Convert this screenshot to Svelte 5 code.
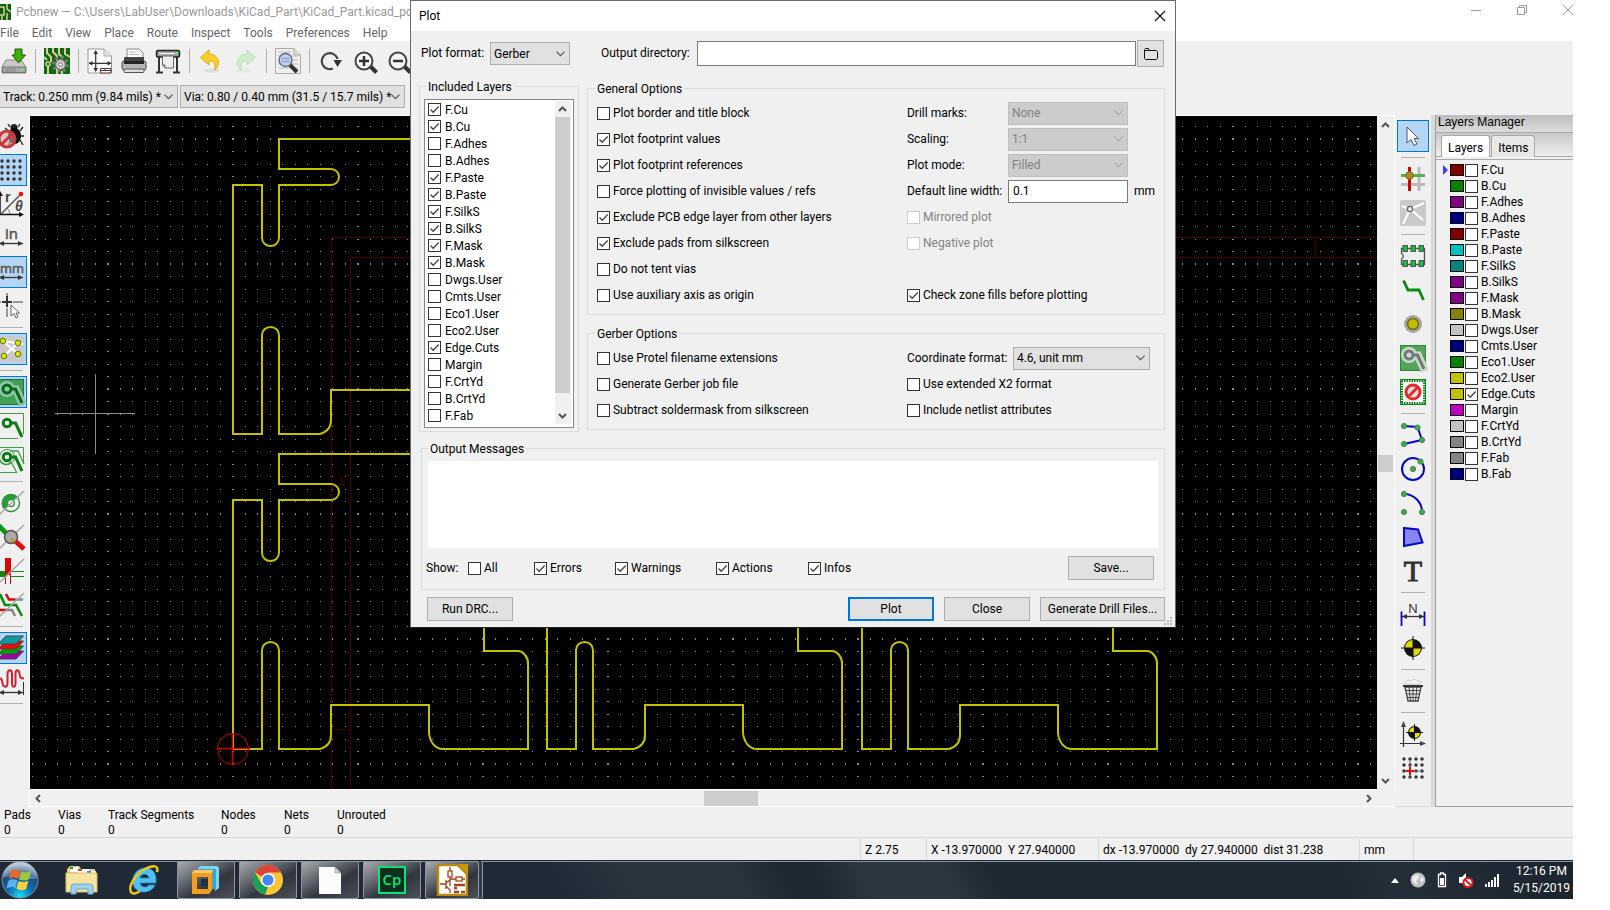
<script>
  const menus = ['File', 'Edit', 'View', 'Place', 'Route', 'Inspect', 'Tools', 'Preferences', 'Help'];

  const zone = (bg, border, halo, trace) => `
    <rect x="0.5" y="0.5" width="25" height="25" fill="${bg}" stroke="${border}"/>
    <path d="M9 10.500H18L25 26" fill="none" stroke="${halo}" stroke-width="8"/>
    <circle cx="9" cy="10" r="8" fill="${halo}"/>
    <path d="M12 10H17.500L24 24" fill="none" stroke="${trace}" stroke-width="3"/>
    <circle cx="9" cy="10" r="4" fill="${halo}" stroke="${trace}" stroke-width="3"/>`;
  const slash = '<path d="M0 26L26 1" stroke="#a8a8a8" stroke-width="1.500"/>';
  const dot = (x, y) => `<circle cx="${x}" cy="${y}" r="2.600" fill="#2cb83c" stroke="#5f7a5f"/>`;
  const range = [4, 10, 16, 22];
  const dots = range.map((x) => range.map((y) => `<circle cx="${x}" cy="${y}" r="1.700" fill="#333"/>`).join('')).join('');
  const target = (x, y, r, l) => `
    <circle cx="${x}" cy="${y}" r="${r}" fill="#111"/>
    <path d="M${x} ${y}V${y - r + 1}A${r - 1} ${r - 1} 0 0 0 ${x - r + 1} ${y}Z M${x} ${y}V${y + r - 1}A${r - 1} ${r - 1} 0 0 0 ${x + r - 1} ${y}Z" fill="#e2da00"/>
    <path d="M${x} ${y - l}V${y + l}M${x - l} ${y}H${x + l}" stroke="#111"/>`;
  const arrowH = (y, a, b) => `<path d="M${a} ${y}H${b}" stroke="#333" stroke-width="1.300"/><path d="M${a} ${y}l5 -2.500v5zM${b} ${y}l-5 -2.500v5z" fill="#333"/>`;
  const lens = (inner) => `
    <path d="M18 18L24.500 24.500" stroke="#333" stroke-width="4"/>
    <circle cx="12" cy="13" r="8.500" fill="#f4f4f4" stroke="#444" stroke-width="2"/>${inner}`;
  const page = '<path d="M1 1H17L24.500 8V25H1Z" fill="#fafafa" stroke="#999"/><path d="M17 1V8H24.500" fill="#e4e4e4" stroke="#aaa"/>';

  const icons = {
    save: `<path d="M5 12H20L25 19V25H1V19Z" fill="#c9c9c9" stroke="#888"/><path d="M1.500 19H24.500V24.500H1.500Z" fill="#a9a9a9" stroke="#777"/><path d="M4 21H15M4 23H15" stroke="#888"/><rect x="20" y="21" width="2.500" height="2" fill="#4f4"/><path d="M14 1H21V7H24.500L17.700 15L11 7H14Z" fill="#3fae08" stroke="#1d5a02"/>`,
    board: `<rect width="26" height="26" fill="#0c6a12"/><path d="M3 0V5L7 9V14M9 0V4L13 8V26M15 0V6L19 10M21 0V6L26 9M4 26V17M0 9L3 12M18 26V23" fill="none" stroke="#e2c79a" stroke-width="2"/><circle cx="4" cy="16" r="2" fill="#0c6a12" stroke="#e2c79a" stroke-width="1.500"/><circle cx="16.500" cy="16.500" r="7" fill="none" stroke="#777" stroke-width="3" stroke-dasharray="2.700 2.800"/><circle cx="16.500" cy="16.500" r="5" fill="#ddd" stroke="#777" stroke-width="1.500"/><circle cx="16.500" cy="16.500" r="2" fill="#eee" stroke="#666"/>`,
    page: `${page}<path d="M8.700 3V23M2 15.300H24" stroke="#333" stroke-width="1.200"/><path d="M8.700 2l2.300 4h-4.600zM8.700 24l2.300 -4h-4.600zM1.500 15.300l4 -2.300v4.600zM24.500 15.300l-4 -2.300v4.600z" fill="#333"/><path d="M13.500 20.500H24V25H13.500ZM13.500 22.500H24M18 20V22.500" fill="#fff" stroke="#533"/>`,
    print: `<path d="M6 1H18L22 5V13H6Z" fill="#fff" stroke="#888"/><path d="M8 4H16M8 6.500H18" stroke="#bbb"/><rect x="3" y="9" width="20" height="6" rx="1" fill="#444"/><rect x="1" y="13" width="24" height="9" rx="2" fill="#b4b4b4" stroke="#444"/><rect x="3" y="13" width="20" height="3" fill="#222"/><rect x="3" y="21" width="20" height="3.500" rx="1" fill="#ddd" stroke="#555"/>`,
    plotter: `<path d="M4 9V24M22 9V24" stroke="#333" stroke-width="2"/><path d="M1 24.500H8M18 24.500H25" stroke="#333" stroke-width="2"/><rect x="1.500" y="2.500" width="23" height="6.500" rx="1.500" fill="#999" stroke="#222" stroke-width="1.500"/><path d="M4 5.500H20" stroke="#eee" stroke-width="1.500"/><rect x="21" y="4" width="2" height="2" fill="#5f5"/><path d="M7.500 8V17L10 20H18.500V8Z" fill="#eee" stroke="#666"/><path d="M7.500 17H10V20" fill="#bbb" stroke="#666"/>`,
    undo: `<ellipse cx="14" cy="22.500" rx="8" ry="2" fill="#ddd"/><path d="M11 2L2.500 9.500L11 17V13C16 12.500 18 15 16.500 22C23 18 22 6.500 11 6Z" fill="#f6cf29" stroke="#dcae0c"/>`,
    redo: `<g opacity="0.45"><ellipse cx="12" cy="22.500" rx="8" ry="2" fill="#ddd"/><path d="M15 2L23.500 9.500L15 17V13C10 12.500 8 15 9.500 22C3 18 4 6.500 15 6Z" fill="#a5e8a0" stroke="#7ccf74"/></g>`,
    find: `<path d="M0.500 0.500H19L25.500 7V25.500H0.500Z" fill="#f0f0f0" stroke="#aaa"/><path d="M19 0.500V7H25.500" fill="#ddd" stroke="#aaa"/><path d="M3 4H17M3 8H23M3 12H23M3 16H23M3 20H23" stroke="#bbb"/><path d="M15 17L22 24" stroke="#333" stroke-width="4"/><circle cx="10.500" cy="12" r="6.500" fill="#c4d2ea" stroke="#5a6688" stroke-width="1.300"/><path d="M6 10.500H15M6 13.500H15" stroke="#8fa6d0" stroke-width="1.300"/>`,
    refresh: `<path d="M15 20.500A8 8 0 1 1 19.500 11" fill="none" stroke="#444" stroke-width="2.200"/><path d="M15.500 12H24L19.500 19Z" fill="#333"/>`,
    zoomin: lens('<path d="M7 13H17M12 8V18" stroke="#333" stroke-width="2.500"/>'),
    zoomout: lens('<path d="M7 13H17" stroke="#333" stroke-width="2.500"/>'),
    bug: `<path d="M12 4L10 1M20 4L22 1M11 8L7 5M22 8L25 4M22 13H26M22 17L25 22M12 18L11 22" stroke="#222" fill="none" stroke-width="1.300"/><circle cx="16" cy="4.500" r="3.500" fill="#222"/><ellipse cx="16.500" cy="13" rx="6.500" ry="8" fill="#050505"/><circle cx="9" cy="16" r="8" fill="#d9a5a5" fill-opacity="0.6" stroke="#c8383a" stroke-width="3"/><path d="M3.500 21.500L14.500 10.500" stroke="#c8383a" stroke-width="3"/>`,
    grid: dots,
    polar: `<path d="M2 2V23.500H24" fill="none" stroke="#111" stroke-width="1.500"/><path d="M2 0L5 5H0ZM26 23.500L21 21V26Z" fill="#111"/><path d="M3 23L22 4" stroke="#555" stroke-width="1.500"/><path d="M9 17A9 9 0 0 1 12 23" fill="none" stroke="#777"/><circle cx="23" cy="3" r="2.300" fill="#f01010"/><text x="7" y="11" font-family="Liberation Sans" font-size="14" font-weight="bold" fill="#444">r</text><text x="17" y="20" font-family="Liberation Sans" font-size="14" font-style="italic" font-weight="bold" fill="#444">θ</text>`,
    inch: `<text x="7" y="14" font-family="Open Sans" font-size="15" fill="#555" stroke="#555" stroke-width="0.500">in</text>${arrowH(18.500, 1, 25)}`,
    mm: `<text x="2" y="14" font-family="Open Sans" font-size="13" fill="#555" stroke="#555" stroke-width="0.500">mm</text>${arrowH(18.500, 1, 25)}`,
    cursor: `<path d="M9 0V3M9 15V24M0 9H3M15 9H25" stroke="#999" stroke-width="2"/><path d="M9 3V14M4 9H14" stroke="#333" stroke-width="2"/><path d="M13 12V23L16 20.500L18 25L20 24L18 20H21.500Z" fill="#fff" stroke="#666"/>`,
    rats: `<rect width="26" height="26" rx="2" fill="#cacaca"/><path d="M5 5L25 8M5 5L20 18M20 7L6 20" stroke="#fff" stroke-width="2"/>${[[5, 5], [20, 7], [6, 20], [20, 18]].map(([x, y]) => `<circle cx="${x}" cy="${y}" r="2.800" fill="#d6ea00" stroke="#66701a"/>`).join('')}`,
    zoneFill: zone('#439f57', '#1d7a2c', '#8fc7b0', '#0b6b14'),
    zoneNone: `<path d="M0 0.500H25.500V21M0 25.500H20" fill="none" stroke="#3d9f45"/><path d="M12 10H17.500L24 24" fill="none" stroke="#0b7d14" stroke-width="3"/><circle cx="9" cy="10" r="3.800" fill="#fff" stroke="#0b7d14" stroke-width="3"/>`,
    zoneLine: `<path d="M0 0.500H25.500V16M0 25.500H18" fill="none" stroke="#3d9f45"/><path d="M2 14C4 18 10 19 13 15L19 26M12 4H20L26 17" fill="none" stroke="#3d9f45" stroke-width="1.300"/><circle cx="9" cy="10" r="7.500" fill="none" stroke="#3d9f45"/><path d="M12 10H17.500L24 24" fill="none" stroke="#0b7d14" stroke-width="3"/><circle cx="9" cy="10" r="3.800" fill="#fff" stroke="#0b7d14" stroke-width="3"/>`,
    pad: `<circle cx="13" cy="13" r="8.500" fill="#fff" stroke="#2c9a38" stroke-width="1.500"/><path d="M6.500 20A9 9 0 0 1 19.500 6.500Z" fill="#2c9a38"/><circle cx="13" cy="13" r="3.500" fill="#f4f4f4" stroke="#2c9a38" stroke-width="1.500"/>${slash}`,
    via: `<path d="M0 1L9 10" stroke="#0a9a0f" stroke-width="5"/><path d="M15 15L26 25" stroke="#e00d0d" stroke-width="5"/>${slash}<circle cx="13" cy="13" r="6.500" fill="#aaa" stroke="#555" stroke-width="1.500"/><path d="M13 13L17.500 17.500A6 6 0 0 1 13 18Z" fill="#c2a010"/>`,
    track: `<rect y="13" width="9" height="6" fill="#0a8a12"/><rect x="7" width="6" height="17" fill="#d80808"/><path d="M13 13.500H26M13 18.500H26" stroke="#0a8a12"/><path d="M7.500 17V26M12.500 17V26" stroke="#d80808"/>${slash}`,
    contrast: `<path d="M8 2L11 7.500H17" fill="none" stroke="#d80808" stroke-width="2.500"/><path d="M17 7.500H25M9 18H14L17 24" fill="none" stroke="#888" stroke-width="2.500"/><path d="M0 18H9" stroke="#d80808" stroke-width="2.500"/><path d="M2 2L7 13H18L24 24" fill="none" stroke="#0a8a12" stroke-width="2.600"/>${slash}`,
    layers: `<g stroke="#444"><path d="M8 16H25.500L18 24H0Z" fill="#a000a8"/><path d="M8 11H25.500L18 19H0Z" fill="#00a010"/><path d="M8 6H25.500L18 14H0Z" fill="#f00c0c"/><path d="M8 1H25.500L18 9H0Z" fill="#109aa0"/></g>`,
    meander: `<path d="M1 9.500C4 9 4 11 4.500 14C5 19 9.500 19 9.500 14V5C9.500 0 14 0 14 5V14C14 19 17.500 19 17.500 14V5C17.500 0 21 0 21.500 5C22 9 23 9.500 26 9.500" fill="none" stroke="#c8282c" stroke-width="2"/>${arrowH(23.500, 1, 25)}<path d="M25.500 13V26" stroke="#333"/>`,
    pointer: `<path d="M7 4V20L11 16.500L14 22.500L17 21L14 15.500H18.500Z" fill="#fafafa" stroke="#555"/>`,
    local: `<path d="M19 1V25M1 18.500H25" stroke="#bbb" stroke-width="3"/><path d="M1 9.500H25" stroke="#56ae56" stroke-width="3"/><path d="M9.500 1V25" stroke="#c00808" stroke-width="3"/><circle cx="9.500" cy="9.500" r="3.800" fill="#a58a1a" stroke="#7d6a20"/>`,
    ratsLocal: `<rect width="26" height="26" rx="2" fill="#cacaca"/><path d="M10 9L2 6M10 9L24 3M10 9L23 20M10 9L3 24" stroke="#fff" stroke-width="2"/><circle cx="10" cy="9" r="2.600" fill="#eee" stroke="#666" stroke-width="1.300"/>`,
    footprint: `<path d="M1.500 5.500H24.500V21.500H1.500V16A3 3 0 0 0 1.500 10.500Z" fill="#eee" stroke="#555" stroke-width="1.300"/>${[3, 11, 19].map((x) => `<rect x="${x}" y="2.500" width="4.500" height="6" fill="#0fc52e" stroke="#555"/><rect x="${x}" y="17.500" width="4.500" height="6" fill="#0fc52e" stroke="#555"/>`).join('')}`,
    route: `<path d="M3.500 3.500L8 13H19L23.500 23" fill="none" stroke="#0a8a12" stroke-width="2.800"/>`,
    viaAdd: `<circle cx="13" cy="13" r="9" fill="#a6a6a6"/><circle cx="13" cy="13" r="5.500" fill="#c2bc00" stroke="#726f10" stroke-width="1.500"/>`,
    zoneAdd: zone('#55a25a', '#2b8a35', '#c9dccb', '#777'),
    keepout: `<rect x="1.500" y="1.500" width="23" height="23" fill="#fff" stroke="#0a8a12" stroke-width="3" stroke-dasharray="1.500 1"/><rect x="0.500" y="0.500" width="25" height="25" fill="none" stroke="#0a8a12"/><circle cx="13" cy="13" r="7" fill="#f3dcdc" stroke="#e02c2c" stroke-width="3"/><path d="M8 18L18 8" stroke="#e02c2c" stroke-width="3"/>`,
    polyline: `<path d="M4 4L17.500 5L22 18L4 22" fill="none" stroke="#0808c0" stroke-width="2"/>${dot(4, 4)}${dot(17.500, 5.500)}${dot(22, 18)}${dot(4, 22)}`,
    circle: `<circle cx="13" cy="13" r="11" fill="none" stroke="#0808c0" stroke-width="2"/>${dot(13, 13)}${dot(20.500, 5.500)}`,
    arc: `<path d="M4 4A18 18 0 0 1 22 22" fill="none" stroke="#0808c0" stroke-width="2"/>${dot(4, 4)}${dot(4, 22)}${dot(22, 22)}`,
    polygon: `<path d="M4 4L18 5.500L22.500 18.500L4 22Z" fill="#8585f5" stroke="#0808c0" stroke-width="2"/>`,
    text: `<text x="13" y="23" text-anchor="middle" font-family="Liberation Serif" font-size="30" fill="#333" stroke="#333">T</text>`,
    dimension: `<text x="13" y="11.500" text-anchor="middle" font-family="Liberation Sans" font-size="13" fill="#333">N</text>${arrowH(15.500, 2, 24)}<path d="M1.500 10.500V25M24.500 10.500V25" stroke="#0808c0" stroke-width="1.800"/>`,
    target: target(13, 13, 9, 12),
    trash: `<path d="M4 5L8 2L11 3L14 1L18 3L22 4L20 6H5Z" fill="#f4f4f4" stroke="#ccc"/><path d="M5 9L8 23H18L21 9Z" fill="#eee" stroke="#444" stroke-width="1.300"/><path d="M6 12.500H20M7 16H19.500M7.500 19.500H19M9 9L10.500 23M13 9V23M17 9L15.500 23" stroke="#444"/><path d="M3 8H23" stroke="#333" stroke-width="2"/>`,
    origin: `<path d="M3.500 4V26M0 22.500H22" stroke="#333" stroke-width="1.200"/><path d="M3.500 0L6 6H1ZM26 22.500L20 20V25Z" fill="#444"/>${target(14.500, 11.500, 6.500, 8.500)}`,
    gridOrigin: `${dots}<path d="M10 5V22M10 16H22" stroke="#666"/><path d="M10 12V20M6 16H14" stroke="#e01010" stroke-width="2"/>`
  };

  const topTools = ['save', '|', 'board', '|', 'page', 'print', 'plotter', '|', 'undo', 'redo', '|', 'find', '|', 'refresh', 'zoomin', 'zoomout'];
  const leftTools = ['bug', 'grid', 'polar', 'inch', 'mm', 'cursor', '|', 'rats', '|', 'zoneFill', 'zoneNone', 'zoneLine', '|', 'pad', 'via', 'track', 'contrast', '|', 'layers', 'meander', '|'];
  const rightTools = ['pointer', '|', 'local', 'ratsLocal', '|', 'footprint', 'route', 'viaAdd', 'zoneAdd', 'keepout', '|', 'polyline', 'circle', 'arc', 'polygon', 'text', '|', 'dimension', 'target', '|', 'trash', '|', 'origin', 'gridOrigin'];
  const pressed = ['grid', 'mm', 'rats', 'zoneFill', 'layers', 'pointer'];

  const layers = [
    ['F.Cu', '#840000', true], ['B.Cu', '#008400', true], ['F.Adhes', '#840084', false], ['B.Adhes', '#000084', false],
    ['F.Paste', '#840000', true], ['B.Paste', '#00c2c2', true], ['F.SilkS', '#008484', true], ['B.SilkS', '#840084', true],
    ['F.Mask', '#840084', true], ['B.Mask', '#848400', true], ['Dwgs.User', '#c2c2c2', false], ['Cmts.User', '#000084', false],
    ['Eco1.User', '#008400', false], ['Eco2.User', '#c2c200', false], ['Edge.Cuts', '#c2c200', true], ['Margin', '#c200c2', false],
    ['F.CrtYd', '#c2c2c2', false], ['B.CrtYd', '#848484', false], ['F.Fab', '#848484', false], ['B.Fab', '#000084', false]
  ];

  const general = [
    ['Plot border and title block', false], ['Plot footprint values', true], ['Plot footprint references', true],
    ['Force plotting of invisible values / refs', false], ['Exclude PCB edge layer from other layers', true],
    ['Exclude pads from silkscreen', true], ['Do not tent vias', false], ['Use auxiliary axis as origin', false]
  ];
  const disabledChoices = [['Drill marks:', 'None'], ['Scaling:', '1:1'], ['Plot mode:', 'Filled']];
  const gerber = ['Use Protel filename extensions', 'Generate Gerber job file', 'Subtract soldermask from silkscreen'];
  const show = [['All', false], ['Errors', true], ['Warnings', true], ['Actions', true], ['Infos', true]];
  const counts = ['Pads', 'Vias', 'Track Segments', 'Nodes', 'Nets', 'Unrouted'];

  const stepsX = [13, 25, 38, 50, 63, 75, 88, 100, 113];
  const stepsY = [13, 26, 38, 51, 63, 76, 88, 101, 113];
  const outline = 'M279 139V169H331A8 8 0 0 1 331 185H279V238A8.500 8 0 0 1 262 238V185H233V434H262V335A8.500 8 0 0 1 279 335V434H320C327 432 331 427 331 420V390H429V418C430 427 435 434 443 434H528V348C528 342 523 336 518 336H484V139Z';
  const copies = [0, 315].flatMap((y) => [0, 314, 629].map((x) => [x, y]));
</script>

{#snippet tools(list)}
  {#each list as name}
    {#if name === '|'}
      <span class="sep"></span>
    {:else}
      <button class="tool" class:on={pressed.includes(name)} aria-label={name}>
        <svg width="26" height="26" viewBox="0 0 26 26">{@html icons[name]}</svg>
      </button>
    {/if}
  {/each}
{/snippet}

{#snippet check(label, checked, disabled = false)}
  <label class="check" class:off={disabled}><input type="checkbox" {checked} {disabled} /><span>{label}</span></label>
{/snippet}

<div class="desktop">
  <header class="title">
    <svg class="logo" width="11" height="16" viewBox="0 0 11 16"><rect width="11" height="16" fill="#0b6310" /><path d="M0 3H4V11H0M7 0V5L11 8M7 16V9M2 16V12" fill="none" stroke="#e6c99b" stroke-width="1.500" /></svg>
    <span>Pcbnew — C:\Users\LabUser\Downloads\KiCad_Part\KiCad_Part.kicad_pcb</span>
    <div class="winbtns">
      <button aria-label="Minimize"><svg width="12" height="12"><path d="M1 6.500H11" /></svg></button>
      <button aria-label="Restore"><svg width="12" height="12"><path d="M1.500 3.500H8.500V10.500H1.500ZM3.500 3.500V1.500H10.500V8.500H8.500" /></svg></button>
      <button aria-label="Close window"><svg width="12" height="12"><path d="M1 1L11 11M11 1L1 11" /></svg></button>
    </div>
  </header>
  <nav class="menu">{#each menus as m}<button>{m}</button>{/each}</nav>
  <div class="toolbar">{@render tools(topTools)}</div>
  <div class="combos">
    <select class="track" aria-label="Track width"><option>Track: 0.250 mm (9.84 mils) *</option></select>
    <select class="viasize" aria-label="Via size"><option>Via: 0.80 / 0.40 mm (31.5 / 15.7 mils) *</option></select>
  </div>

  <main>
    <aside class="tools left">{@render tools(leftTools)}</aside>
    <section class="view">
      <div class="canvas">
        <svg width="100%" height="100%">
          <defs>
            <pattern id="grid" x="77" y="22" width="125" height="125" patternUnits="userSpaceOnUse">
              <g fill="#8a8a8a" shape-rendering="crispEdges">
                <rect width="2" height="2" />
                {#each stepsX as x}<rect {x} width="1" height="2" />{/each}
                {#each stepsY as y}
                  <rect {y} width="2" height="1" />
                  {#each stepsX as x}<rect {x} {y} width="1" height="1" />{/each}
                {/each}
              </g>
            </pattern>
          </defs>
          <rect width="100%" height="100%" fill="url(#grid)" />
          <g transform="translate(-30 -116)" fill="none">
            <path d="M331.500 800V237.500H1400M350.500 800V257.500H1400M1315.500 237V257M331 729.500H350M338.500 488L341.500 476L344.500 488M339.500 484.500H343.500" stroke="#4a0000" />
            {#each copies as [x, y]}
              <path d={outline} transform="translate({x} {y})" stroke="#c2c200" stroke-width="2" />
            {/each}
            <path d="M95.500 374V454M55 413.500H135" stroke="#8c8c8c" />
            <circle cx="233" cy="749" r="15.500" stroke="#c80000" />
            <path d="M217 748.500H250M232.500 733V765" stroke="#d80000" stroke-width="1.500" />
          </g>
        </svg>
      </div>
      <div class="vscroll">
        <svg width="9" height="8"><path d="M1 6L4.500 2.500L8 6" /></svg>
        <i></i>
        <svg width="9" height="8"><path d="M1 2L4.500 5.500L8 2" /></svg>
      </div>
      <div class="hscroll">
        <svg width="8" height="9"><path d="M6 1L2.500 4.500L6 8" /></svg>
        <i></i>
        <svg width="8" height="9"><path d="M2 1L5.500 4.500L2 8" /></svg>
      </div>
    </section>
    <aside class="tools right">{@render tools(rightTools)}</aside>
    <aside class="manager">
      <h2>Layers Manager</h2>
      <div class="tabs"><button class="active">Layers</button><button>Items</button></div>
      <ul>
        {#each layers as [name, color], i}
          <li>
            <svg width="6" height="10">{#if i === 0}<path d="M0 0L5 5L0 10Z" fill="#3c3cf0" />{/if}</svg>
            <b style="background:{color}"></b>
            {@render check(name, name === 'Edge.Cuts')}
          </li>
        {/each}
      </ul>
    </aside>
  </main>

  <dl class="counts">{#each counts as c}<div><dt>{c}</dt><dd>0</dd></div>{/each}</dl>
  <footer class="status">
    <span></span><span>Z 2.75</span><span>X -13.970000&nbsp; Y 27.940000</span><span>dx -13.970000&nbsp; dy 27.940000&nbsp; dist 31.238</span><span>mm</span><span></span>
  </footer>

  <div class="taskbar">
    <button class="start" aria-label="Start">
      <svg width="38" height="38" viewBox="0 0 38 38">
        <defs><radialGradient id="orb" cx="50%" cy="95%" r="90%"><stop offset="0" stop-color="#18e0ff" /><stop offset="0.400" stop-color="#0d6aa8" /><stop offset="0.750" stop-color="#214a78" /><stop offset="1" stop-color="#a8c0d4" /></radialGradient></defs>
        <circle cx="19" cy="19" r="18" fill="url(#orb)" stroke="#7b8fa6" />
        <path d="M2 17A17 17 0 0 1 36 17C28 21 10 12 2 17Z" fill="#fff" opacity="0.280" />
        <path d="M10 10C13 8 16 8 19 10L17 18C14 16 11 16 8 18Z" fill="#e8662a" /><path d="M20 10.500C23 12 26 12 30 10L28 18C25 20 22 20 18 18.500Z" fill="#9cc83a" />
        <path d="M7.500 19.500C11 17.500 14 18 16.500 19.500L14.500 27C11 25 8.500 26 5.500 27.500Z" fill="#5ab0ea" /><path d="M17.500 20C21 21.500 24 21.500 27.500 19.500L25 28C22 30 19 29.500 15.500 27.500Z" fill="#fbd13c" />
      </svg>
    </button>
    <button aria-label="Explorer">
      <svg width="34" height="32" viewBox="0 0 34 32">
        <path d="M2 5L5 2H14L16 5H30V28H2Z" fill="#e8cf7c" /><rect x="5" y="3" width="9" height="5" fill="#fff" /><rect x="5" y="3" width="3" height="2" fill="#1aa02c" /><rect x="12" y="5" width="12" height="5" fill="#fff" /><rect x="13" y="5" width="4" height="2" fill="#d8402a" /><rect x="20" y="7" width="11" height="5" fill="#fff" /><rect x="22" y="7" width="4" height="2" fill="#2b90e0" />
        <path d="M1 9H32V28H1Z" fill="#f6e3a0" stroke="#d9bd66" /><path d="M6 30V23Q6 20 9 20H25Q28 20 28 23V30H23V25H11V30Z" fill="#9dd2ee" stroke="#6aa9cf" />
      </svg>
    </button>
    <button aria-label="Internet Explorer">
      <svg width="34" height="34" viewBox="0 0 34 34">
        <path d="M28 22C25 30 12 32 7 24C3 15 9 5 18 5C27 5 30 12 29 20H13C14 25 20 25 22 22ZM13 15H22C21 10 14 10 13 15Z" fill="#4fc0f2" stroke="#1f86cc" stroke-width="0.700" fill-rule="evenodd" />
        <path d="M30 9C32 2 26 2 18 6C8 11 1 24 4 29C6 32 10 30 13 28" fill="none" stroke="#f2c21c" stroke-width="2.500" />
      </svg>
    </button>
    <button class="run" aria-label="Virtual machine">
      <svg width="30" height="30" viewBox="0 0 30 30"><path d="M9 1H25Q28 1 28 4V23L24 26V5H7V3Z" fill="#7ad6ea" /><path d="M7 4H25V24H21V8H12V10H7Z" fill="#3fa5c8" /><path fill-rule="evenodd" d="M1 7H21V25L18 29H1ZM6 12V24H17V12Z" fill="#f59d1c" /><path d="M1 7L4 5H22L21 8H1Z" fill="#fcc765" /><rect x="10" y="14" width="7" height="7" fill="#203240" /></svg>
    </button>
    <button class="run" aria-label="Chrome">
      <svg width="30" height="30" viewBox="0 0 30 30"><circle cx="15" cy="15" r="15" fill="#fbc738" /><path d="M15 15L2 7.500A15 15 0 0 1 28 7.500H15Z" fill="#dc4437" /><path d="M2 7.500L8.500 19L15 22L12 29.700A15 15 0 0 1 2 7.500Z" fill="#1c9e58" /><circle cx="15" cy="15" r="7" fill="#fff" /><circle cx="15" cy="15" r="5.500" fill="#4384f3" /></svg>
    </button>
    <button class="run" aria-label="Document">
      <svg width="24" height="28" viewBox="0 0 24 28"><path d="M1 1H17L23 7V28H1Z" fill="#fbfbfb" /><path d="M17 1V7H23Z" fill="#ccc" stroke="#888" stroke-width="0.500" /></svg>
    </button>
    <button class="run" aria-label="Captivate">
      <svg width="28" height="28" viewBox="0 0 28 28"><rect x="1" y="1" width="26" height="26" fill="#08301c" stroke="#0fe07a" stroke-width="2" /><text x="14" y="19" text-anchor="middle" font-family="Open Sans" font-size="15" font-weight="600" fill="#0fe07a">Cp</text></svg>
    </button>
    <button class="run stacked" aria-label="KiCad">
      <svg width="32" height="32" viewBox="0 0 32 32"><path d="M2 1H22L31 10V31H2Z" fill="#fff" stroke="#b98a0a" stroke-width="2.500" /><path d="M22 0H32V10Z" fill="#c99a10" /><path d="M14 3V22M14 15H29M4 20H10M10 16V25M10 19L14 16M10 22L14 26V29" fill="none" stroke="#a8421a" stroke-width="1.300" /><rect x="12" y="7" width="4" height="6" fill="#fff" stroke="#a8421a" stroke-width="1.300" /><rect x="20" y="13" width="6" height="4" fill="#fff" stroke="#a8421a" stroke-width="1.300" /><path d="M18 21H29M18 28H23M25 28H29M18 24H21" stroke="#a8421a" stroke-width="2.500" /></svg>
    </button>
    <div class="tray">
      <svg width="8" height="5"><path d="M4 0L8 5H0Z" fill="#fff" /></svg>
      <svg width="16" height="16"><circle cx="8" cy="8" r="7.500" fill="#bdbdbd" /><path d="M3 4L8 2L9 6L6 9L8 13L5 12L2 8ZM11 4L14 7L12 11L10 8Z" fill="#ededed" /></svg>
      <svg width="10" height="16"><path d="M3.500 2.500V1H6.500V2.500H8.500V14.500H1.500V2.500Z" fill="none" stroke="#fff" stroke-width="1.300" /><rect x="3" y="6" width="4" height="7" fill="#fff" /></svg>
      <svg width="16" height="16"><path d="M1 5H4L8 1V15L4 11H1Z" fill="#fff" /><circle cx="10" cy="10.500" r="4.500" fill="#fff" stroke="#d81e1e" stroke-width="2" /><path d="M7 7.500L13 13.500" stroke="#d81e1e" stroke-width="2" /></svg>
      <svg width="15" height="14"><path d="M1 14V11M4 14V9M7 14V7M10 14V4M13 14V1" stroke="#fff" stroke-width="2" /></svg>
      <time>12:16 PM<br />5/15/2019</time>
    </div>
  </div>

  <form class="dialog" onsubmit={(e) => e.preventDefault()}>
    <div class="caption"><span>Plot</span><button type="button" aria-label="Close dialog"><svg width="12" height="12"><path d="M1 1L11 11M11 1L1 11" /></svg></button></div>
    <div class="format">
      <label for="fmt">Plot format:</label>
      <select id="fmt"><option>Gerber</option></select>
      <label for="dir">Output directory:</label>
      <input id="dir" type="text" />
      <button type="button" class="btn" aria-label="Browse"><svg width="16" height="14"><path d="M1.500 11.500V2.500L2.500 1.500H5.500L6.500 3.500H13.500L14.500 4.500V11.500L13.500 12.500H2.500ZM2 3.500H7" fill="none" stroke="#111" /></svg></button>
    </div>
    <div class="cols">
      <fieldset class="included">
        <legend>Included Layers</legend>
        <div class="listbox">
          <div class="items">{#each layers.slice(0, 19) as [name, , on]}{@render check(name, on)}{/each}</div>
          <div class="bar">
            <svg width="9" height="8"><path d="M1 6L4.500 2.500L8 6" /></svg>
            <i></i>
            <svg width="9" height="8"><path d="M1 2L4.500 5.500L8 2" /></svg>
          </div>
        </div>
      </fieldset>
      <div class="options">
        <fieldset>
          <legend>General Options</legend>
          <div class="split">
            <div class="rows">{#each general as [label, on]}{@render check(label, on)}{/each}</div>
            <div class="rows">
              {#each disabledChoices as [label, value], i}
                <div class="pair"><label for="c{i}">{label}</label><select id="c{i}" disabled><option>{value}</option></select></div>
              {/each}
              <div class="pair"><label for="lw">Default line width:</label><input id="lw" type="text" value="0.1" /><span>mm</span></div>
              {@render check('Mirrored plot', false, true)}
              {@render check('Negative plot', false, true)}
              <div></div>
              {@render check('Check zone fills before plotting', true)}
            </div>
          </div>
        </fieldset>
        <fieldset>
          <legend>Gerber Options</legend>
          <div class="split">
            <div class="rows">{#each gerber as label}{@render check(label, false)}{/each}</div>
            <div class="rows">
              <div class="pair wide"><label for="coord">Coordinate format:</label><select id="coord"><option>4.6, unit mm</option></select></div>
              {@render check('Use extended X2 format', false)}
              {@render check('Include netlist attributes', false)}
            </div>
          </div>
        </fieldset>
      </div>
    </div>
    <fieldset class="output">
      <legend>Output Messages</legend>
      <textarea aria-label="Output messages" readonly></textarea>
      <div class="show">
        <span>Show:</span>
        {#each show as [label, on]}{@render check(label, on)}{/each}
        <button type="button" class="btn">Save...</button>
      </div>
    </fieldset>
    <div class="actions">
      <button type="button" class="btn">Run DRC...</button>
      <span></span>
      <button type="submit" class="btn default">Plot</button>
      <button type="button" class="btn">Close</button>
      <button type="button" class="btn drill">Generate Drill Files...</button>
    </div>
    <svg class="grip" width="9" height="9"><path d="M6 0h2v2h-2zM3 3h2v2h-2zM6 3h2v2h-2zM0 6h2v2h-2zM3 6h2v2h-2zM6 6h2v2h-2z" fill="#bfbfbf" /></svg>
  </form>
</div>

<style>
  :global(body) { margin: 0; background: #fff; }
  .desktop, .desktop * { box-sizing: border-box; }
  .desktop {
    position: relative;
    display: flex;
    flex-direction: column;
    height: calc(100vh - 11px);
    margin: 0 37px 11px 0;
    overflow: hidden;
    background: #f0f0f0;
    color: #000;
    font: 12px/16px Roboto, "Segoe UI", sans-serif;
    white-space: nowrap;
  }
  button, input, select, textarea { font: inherit; color: inherit; margin: 0; }
  button { padding: 0; border: 0; background: none; display: flex; align-items: center; justify-content: center; }
  svg { display: block; flex: none; }

  .title { display: flex; align-items: center; gap: 5px; height: 24px; background: #fff; color: #999; overflow: hidden; }
  .winbtns { display: flex; gap: 34px; margin: 0 -1px 0 auto; padding-bottom: 4px; }
  .winbtns svg { fill: none; stroke: #999; }
  .menu { display: flex; gap: 13px; height: 17px; background: #fff; color: #666; }
  .toolbar { display: flex; align-items: center; height: 40px; margin-left: -3px; }
  .tool svg { overflow: visible; }
  .toolbar .tool { width: 34px; height: 34px; }
  .toolbar .sep { flex: none; width: 1px; height: 24px; margin: 0 4px; background: #b0b0b0; }
  .combos { display: flex; gap: 2px; height: 34px; padding-top: 4px; }
  select {
    appearance: none;
    height: 23px;
    padding: 0 20px 0 3px;
    border: 1px solid #adadad;
    border-radius: 0;
    background: #e1e1e1 url("data:image/svg+xml,%3Csvg xmlns='http://www.w3.org/2000/svg' width='9' height='6'%3E%3Cpath d='M.5.7 4.500 4.700 8.500.7' fill='none' stroke='%23555' stroke-width='1.200'/%3E%3C/svg%3E") no-repeat right 4px center;
  }
  select:disabled { background-color: #ccc; border-color: #bfbfbf; color: #838383; opacity: 1; background-image: url("data:image/svg+xml,%3Csvg xmlns='http://www.w3.org/2000/svg' width='9' height='6'%3E%3Cpath d='M.5.7 4.500 4.700 8.500.7' fill='none' stroke='%23aaa' stroke-width='1.200'/%3E%3C/svg%3E"); }
  .combos select { padding-right: 12px; }
  .combos .track { width: 178px; border-left: 0; }
  .viasize { width: 225px; }

  main { display: flex; flex: 1; min-height: 0; }
  .tools { display: flex; flex-direction: column; align-items: center; padding-top: 5px; }
  .tools .tool { flex: none; width: 32px; height: 32px; margin-bottom: 2px; border: 1px solid transparent; }
  .tools .tool.on { background: #b4d6f4; border-color: #0078d7; }
  .tools .sep { flex: none; width: 24px; height: 1px; margin: 3px 0 5px; background: #b0b0b0; }
  .left { width: 32px; margin-left: -5px; margin-right: 3px; }
  .right { width: 36px; border-bottom: 1px solid #dadada; }
  .view { flex: 1; min-width: 0; display: grid; grid-template: 1fr 17px / 1fr 18px; border: solid #fff; border-width: 1px 0 1px; }
  .left + .view { box-shadow: -1px 0 #fff; }
  .canvas { background: #000; overflow: hidden; min-height: 0; }
  .vscroll, .hscroll { display: flex; align-items: center; justify-content: space-between; }
  .vscroll svg, .hscroll svg, .bar svg { fill: none; stroke: #555; stroke-width: 2; }
  .vscroll { flex-direction: column; padding: 5px 0 4px; border-right: 1px solid #fff; }
  .vscroll i { width: 15px; height: 17px; margin-top: 20px; background: #cdcdcd; }
  .hscroll { border-top: 1px solid #fff; padding: 0 4px; }
  .hscroll i { width: 54px; height: 15px; margin-left: 54px; background: #cdcdcd; }

  .manager { width: 142px; border-left: 4px solid #dadada; box-shadow: inset 1px 0 #a0a0a0, inset 0 -1px #a0a0a0; padding-left: 1px; }
  .manager h2 { margin: 0; padding-left: 2px; height: 17px; font: 12px/15px "Liberation Sans", Arial, sans-serif; background: linear-gradient(#bdbdbd, #dcdcdc); }
  .tabs { display: flex; align-items: flex-end; gap: 1px; height: 28px; margin-bottom: 2px; padding: 0 0 2px 5px; border-top: 1px solid #a8a8a8; border-bottom: 1px solid #a8a8a8; background: linear-gradient(#c8c8c8, #f4f4f4); box-shadow: inset 0 -2px #f0f0f0, inset 0 -3px #a8a8a8; }
  .tabs button { height: 22px; padding: 2px 6px 0; border: 1px solid #a8a8a8; border-bottom: 0; border-radius: 3px 3px 0 0; background: #e8e8e8; }
  .tabs .active { background: #fff; }
  .manager ul { margin: 0; padding: 0 0 0 7px; list-style: none; }
  .manager li { display: flex; align-items: center; height: 16px; }
  .manager b { width: 14px; height: 12px; margin: 0 1px; border: 1px solid #000; }

  .counts { display: grid; grid-template-columns: 54px 50px 113px 63px 53px 1fr; margin: 0; height: 31px; padding: 1px 0 0 4px; border-bottom: 1px solid #d7d7d7; line-height: 15px; }
  .counts dd { margin: 0; }
  .status { display: grid; grid-template-columns: 1fr 66px 172px 261px 54px 160px; height: 22px; padding: 1px 0; }
  .status span { padding: 1px 0 0 4px; line-height: 20px; border-left: 1px solid #d7d7d7; }
  .status span:first-child { border: 0; }

  .taskbar {
    display: flex; align-items: center; gap: 4px; height: 39px;
    border-top: 1px solid #1b2531;
    box-shadow: inset 0 1px #8795a7;
    background: linear-gradient(65deg, #1f2a36 0 35%, #2a343f 40% 47%, #1e2833 50% 52%, #2c3641 55% 60%, #1f2933 63% 85%, #252f3a 88%, #1b242d);
  }
  .taskbar > button { width: 58px; height: 38px; }
  .taskbar > .start { width: 40px; margin-right: 9px; }
  .taskbar > .run { border: 1px solid #8f96a0; border-radius: 2px; background: linear-gradient(150deg, #a8abb0, #5a5f67 40%, #31363e 60%, #4a4f58); }
  .taskbar > .stacked { width: 54px; box-shadow: 3px 0 #353c46, 4px 0 #8f96a0; }
  .tray { display: flex; align-items: center; margin-left: auto; gap: 11px; padding-right: 3px; color: #fff; }
  .tray time { text-align: center; line-height: 17px; margin-left: 2px; }

  .check { display: flex; align-items: center; gap: 3px; }
  .check.off { color: #838383; }
  .check input { appearance: none; flex: none; width: 13px; height: 13px; border: 1px solid #333; background: #fff; }
  .check.off input { border-color: #ccc; }
  .check input:checked { background: #fff url("data:image/svg+xml,%3Csvg xmlns='http://www.w3.org/2000/svg' width='11' height='11'%3E%3Cpath d='M1.500 5.500 4.200 8.200 9.700 2.500' fill='none' stroke='%23444' stroke-width='1.300'/%3E%3C/svg%3E") center; }

  .dialog { position: absolute; left: 410px; top: 0; width: 766px; background: #f0f0f0; border: 1px solid #6a6a6a; border-bottom-color: #222; }
  .caption { display: flex; align-items: center; justify-content: space-between; height: 30px; padding: 0 9px 0 8px; background: #fff; }
  .caption svg { fill: none; stroke: #111; stroke-width: 1.2; }
  .format { display: grid; grid-template-columns: 69px 111px 96px 1fr 28px; align-items: center; padding: 9px 11px 0 10px; height: 36px; }
  .format label { padding-bottom: 1px; }
  .format select { width: 80px; }
  .format input { height: 25px; }
  .format .btn { width: 27px; height: 27px; margin-left: 1px; }
  input[type="text"] { min-width: 0; padding: 0 4px; border: 1px solid #7a7a7a; background: #fff; border-radius: 0; }
  fieldset { margin: 0; min-width: 0; padding: 4px 9px 6px; border: 1px solid #dcdcdc; }
  legend { margin-left: -2px; padding: 2px 2px 0; line-height: 14px; }
  .cols { display: flex; gap: 8px; padding: 11px 10px 0 8px; }
  .included { width: 160px; padding: 5px 4px 3px; }
  .included legend { margin-left: 2px; }
  .listbox { display: flex; padding: 1px 2px 3px; border: 1px solid #828790; background: #fff; }
  .items { flex: 1; padding-left: 1px; }
  .items .check, .manager .check { gap: 4px; }
  .items .check { height: 17px; }
  .manager .check { gap: 3px; }
  .bar { display: flex; flex-direction: column; align-items: center; width: 16px; padding: 4px 0; background: #f0f0f0; }
  .bar i { width: 15px; height: 276px; margin: 4px 0 auto; background: #cdcdcd; }
  .options { flex: 1; padding-top: 2px; display: flex; flex-direction: column; gap: 10px; }
  .split { display: grid; grid-template-columns: 310px 1fr; }
  .rows { display: grid; grid-auto-rows: 26px; align-items: center; }
  .pair { display: grid; grid-template-columns: 101px 120px auto; align-items: center; }
  .pair label { padding-bottom: 1px; }
  .pair.wide { grid-template-columns: 106px 137px; }
  .pair input { height: 23px; }
  .pair span { padding-left: 6px; }
  .output { margin: 8px 10px 0 10px; padding: 5px 4px 9px; }
  .output legend { margin-left: 2px; }
  textarea { display: block; width: calc(100% - 4px); height: 87px; margin: 0 2px; padding: 0; border: 0; resize: none; background: #fff; }
  .show { display: grid; grid-template-columns: 42px 66px 81px 101px 92px 1fr 86px; align-items: center; margin-top: 8px; padding-right: 6px; }
  .btn { height: 24px; width: 86px; border: 1px solid #adadad; background: #e1e1e1; }
  .btn.default { border: 2px solid #0078d7; }
  .btn.drill { width: 125px; }
  .actions { display: flex; gap: 10px; padding: 7px 10px 6px 16px; }
  .actions span { flex: 1; }
  .grip { position: absolute; right: 2px; bottom: 1px; }
</style>
